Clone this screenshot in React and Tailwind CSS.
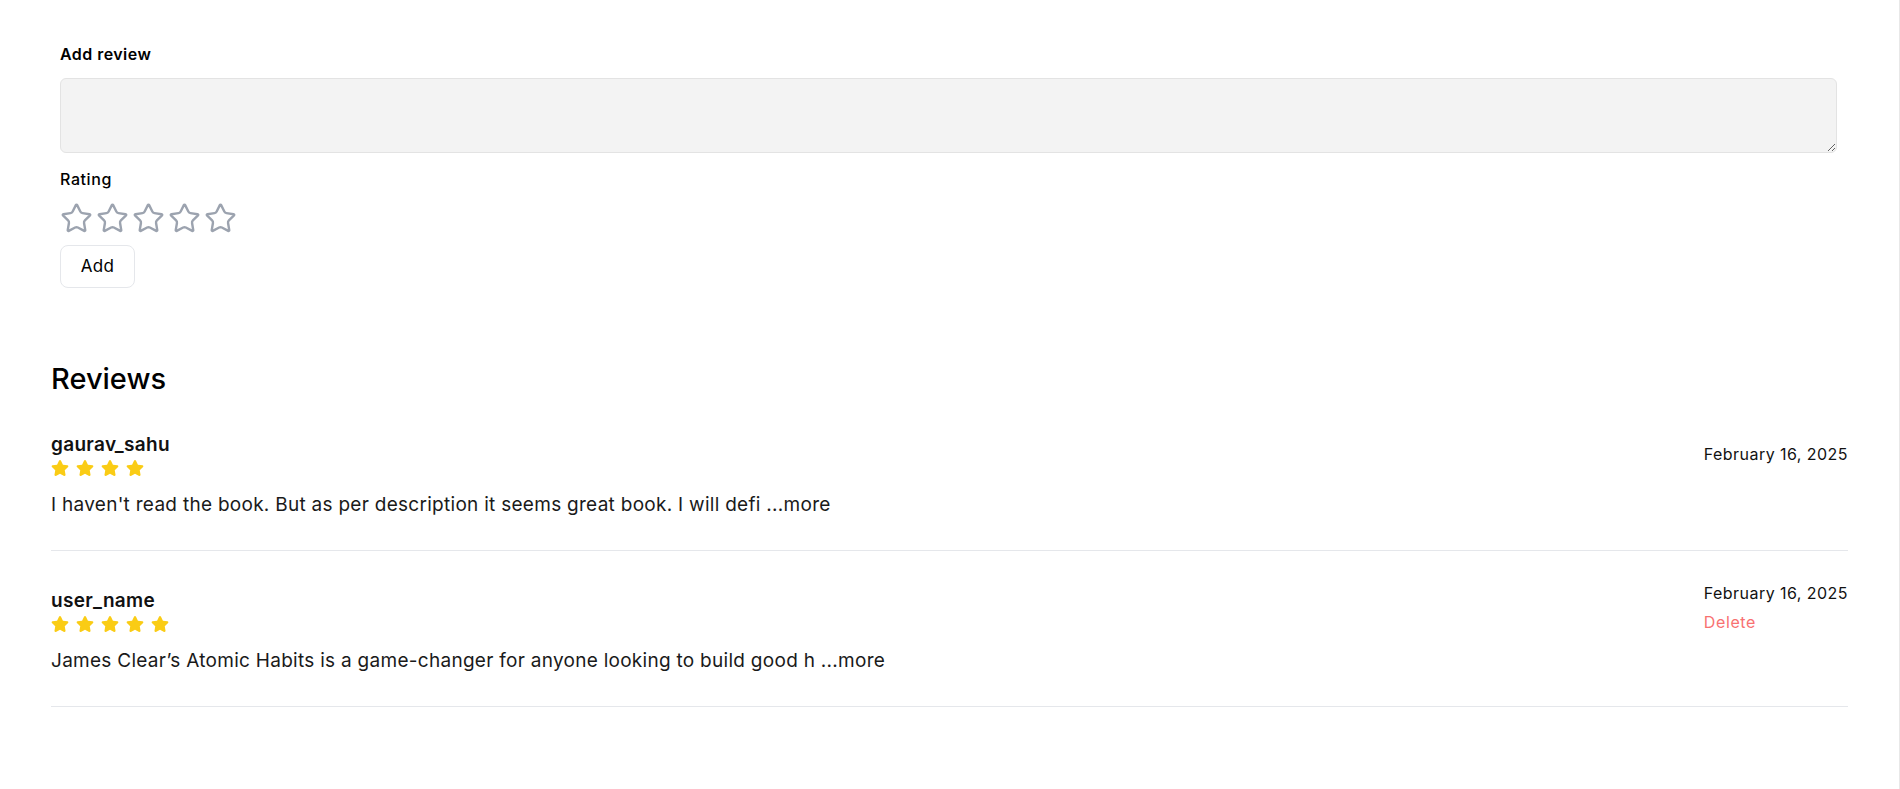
import React from "react";
import { Star } from "lucide-react";
import { FaStar } from "react-icons/fa";

const reviews = [
  {
    name: "gaurav_sahu",
    rating: 4,
    date: "February 16, 2025",
    text: "I haven't read the book. But as per description it seems great book. I will defi",
    own: false,
  },
  {
    name: "user_name",
    rating: 5,
    date: "February 16, 2025",
    text: "James Clear\u2019s Atomic Habits is a game-changer for anyone looking to build good h",
    own: true,
  },
];

function ReviewItem({ r }) {
  return (
    <div className="pt-9 pb-[31px] border-b border-[#e5e7eb]">
      <div className="flex items-center justify-between h-[46px]">
        <div className="flex flex-col">
          <div className="text-[19px] leading-[28px] font-semibold text-[#111] tracking-[0.3px]">{r.name}</div>
          <div className="flex items-center gap-[7px] h-[18px]">
            {Array.from({ length: r.rating }).map((_, i) => (
              <FaStar key={i} size={18} color="#facc15" />
            ))}
          </div>
        </div>
        <div className={`flex flex-col text-[16px] leading-[24px] tracking-[0.45px] ${r.own ? "pb-[5px]" : ""}`}>
          <span className="text-[#111]">{r.date}</span>
          {r.own && (
            <button className="text-left text-[#f87171] mt-[5px] leading-[24px] tracking-[0.6px]">Delete</button>
          )}
        </div>
      </div>
      <p className="mt-[14px] text-[19px] leading-[28px] text-[#1a1a1a] tracking-[0.28px]">
        {r.text} <span className="cursor-pointer">...more</span>
      </p>
    </div>
  );
}

export default function App() {
  return (
    <div
      className="w-full min-h-[789px] bg-white border-r border-[#e8e8e8] text-black"
      style={{ fontFamily: "Inter, 'Noto Sans', sans-serif" }}
    >
      <div className="pl-[60px] pr-[62px] pt-[42px]">
        <label className="block text-[16px] leading-[24px] font-semibold tracking-[0.45px]">Add review</label>
        <textarea className="block mt-3 w-full h-[75px] bg-[#f3f3f3] border border-[#e3e3e3] rounded-md outline-none p-2" />
        <div className="mt-[14px] text-[16px] leading-[24px] font-medium tracking-[0.6px]">Rating</div>
        <div className="mt-[11px] flex items-center gap-[3px] h-[33px]">
          {Array.from({ length: 5 }).map((_, i) => (
            <Star key={i} size={33} strokeWidth={1.75} className="text-[#9ca3af]" />
          ))}
        </div>
        <button className="mt-[10px] w-[75px] h-[43px] border border-[#e5e7eb] rounded-lg bg-white text-[17px] tracking-[0.3px]">
          Add
        </button>
      </div>
      <div className="px-[51px] mt-[75px]">
        <h2 className="text-[29px] leading-[32px] font-medium">Reviews</h2>
        {reviews.map((r, i) => (
          <ReviewItem key={i} r={r} />
        ))}
      </div>
    </div>
  );
}
